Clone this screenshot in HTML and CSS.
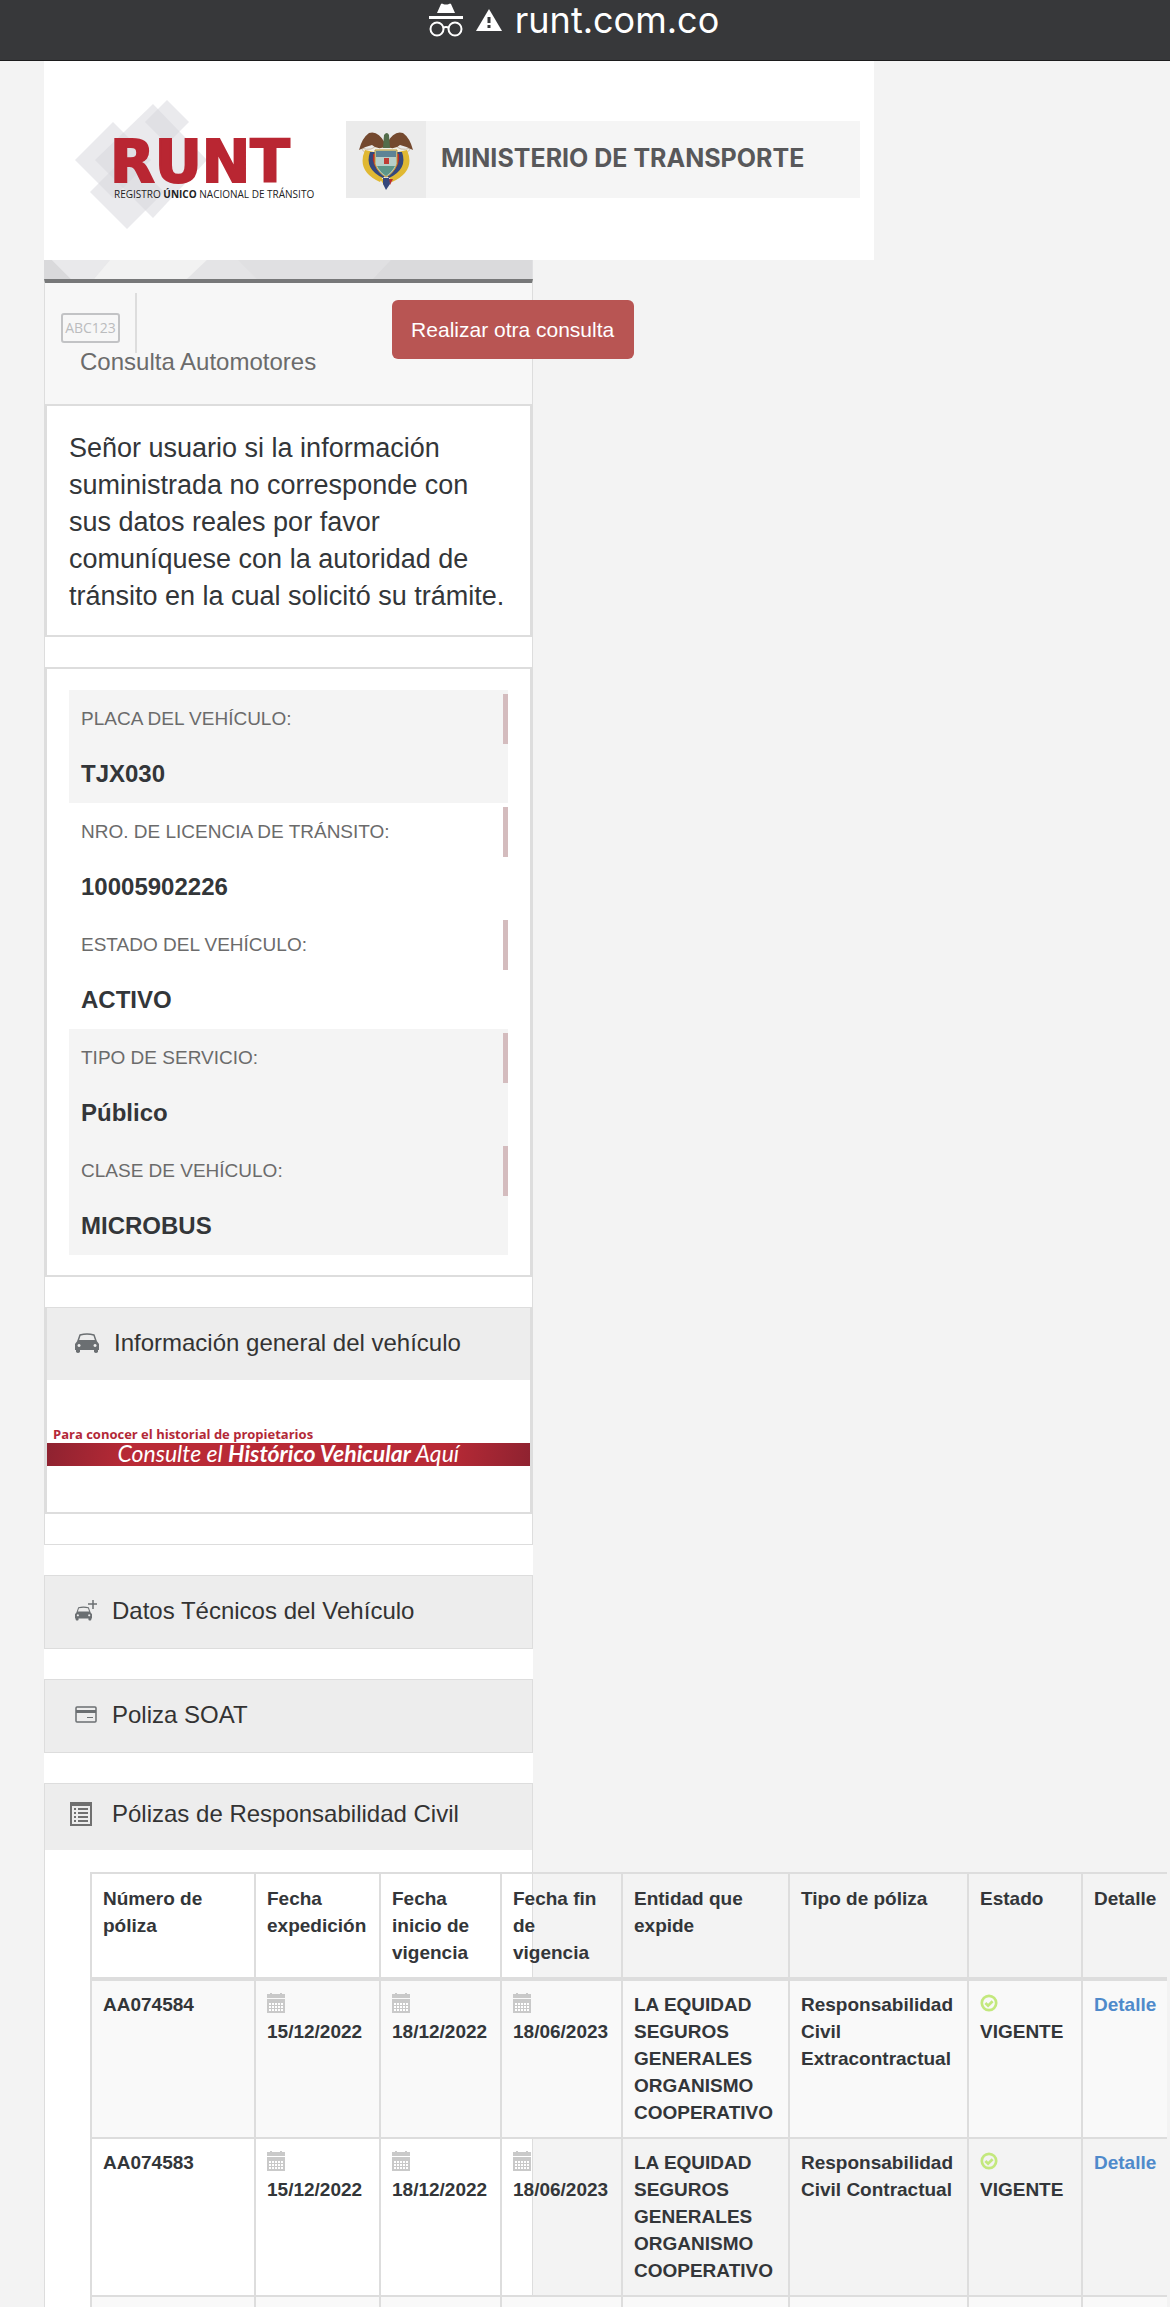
FILE: index.html
```
<!DOCTYPE html>
<html lang="es">
<head>
    <meta charset="UTF-8">
    <meta name="viewport" content="width=device-width, initial-scale=1.0">
    <title>RUNT - Consulta Automotores</title>
    <link rel="stylesheet" href="styles.css">
</head>
<body>
    <!-- iconos reutilizables -->
    <svg width="0" height="0" class="sprite" aria-hidden="true">
        <symbol id="calendar" viewBox="0 0 18 20">
            <path fill="#c9c9c9" d="M0 1h3V0h2v1h8V0h2v1h3v4H0zM0 6h18v14H0z"/>
            <path stroke="#fff" stroke-width="2" stroke-dasharray="2 1" d="M2 11h14M2 14h14M2 17h14"/>
        </symbol>
        <symbol id="check" viewBox="0 0 20 20">
            <circle cx="10" cy="10" r="8" fill="none" stroke="#c3e87d" stroke-width="3"/>
            <path d="M6 10l3 3 5-5" fill="none" stroke="#c3e87d" stroke-width="3"/>
        </symbol>
        <symbol id="car" viewBox="0 0 24 20">
            <path d="M3 8L5 2Q12 0 19 2l2 6" fill="none" stroke="#6b6f72" stroke-width="1.5"/>
            <path fill="#6b6f72" fill-rule="evenodd" d="M3 7h18l3 4v6h-1v2q-2 2-4 0v-2H5v2q-2 2-4 0v-2H0v-6zM4 11a1.5 1.5 0 1 0 .1 0zM20 11a1.5 1.5 0 1 0 .1 0z"/>
        </symbol>
    </svg>

    <div class="browser-bar">
        <svg width="34" height="34" viewBox="0 0 34 34" fill="none" stroke="#fff" stroke-width="2">
            <path fill="#fff" stroke="none" d="M8 10l4-9q1-1 2 0 3 1 6 0 1-1 2 0l4 9zM0 13h34v3H0z"/>
            <circle cx="8" cy="26" r="6.5"/>
            <circle cx="26" cy="26" r="6.5"/>
            <path d="M14 25q3-2 6 0"/>
        </svg>
        <svg width="26" height="22" viewBox="0 0 26 22">
            <path fill="#fff" d="M13 0l13 22H0z"/>
            <path stroke="#37383a" stroke-width="3" d="M13 8v6M13 16v3"/>
        </svg>
        <span>runt.com.co</span>
    </div>

    <div class="page">
        <header class="site-header">
            <svg class="logo" width="262" height="150" viewBox="0 0 262 150">
                <g fill="#d6d6dc" fill-opacity=".5">
                    <path d="M39 37l38 38-38 38L1 75z"/>
                    <path d="M79 19l54 56-54 58-58-58z"/>
                    <path d="M93 15l22 22-22 22-22-22z"/>
                    <path d="M53 70l37 37-37 37-37-37z"/>
                </g>
                <text class="logo-name" x="36" y="97">RUNT</text>
                <text class="logo-sub" x="40" y="113">REGISTRO <tspan class="strong">ÚNICO</tspan> NACIONAL DE TRÁNSITO</text>
            </svg>
            <div class="ministry">
                <div class="ministry-shield">
                    <svg width="58" height="60" viewBox="0 0 58 60">
                        <path fill="#f2f0e6" stroke="#c9b9a5" d="M4 18q12 4 16-4h18q4 8 16 4-5 8-15 8H19q-10 0-15-8z"/>
                        <path fill="#74492f" d="M28 17Q20 20 15 15 7 17 2 20 5 8 12 3q9-3 16 10zM30 17q8 3 13-2 8 2 13 5-3-12-10-17-9-3-16 10z"/>
                        <path fill="#536d4b" d="M27 5q3-4 5 0l1 13h-7z"/>
                        <path fill="#e0b832" d="M8 20q-9 21 15 32l4-7Q14 38 17 22zM50 20q9 21-15 32l-4-7q13-7 10-23z"/>
                        <path fill="#34477c" d="M13 22q-6 17 13 26l3-3Q18 38 19 22zM45 22q6 17-13 26l-3-3q11-7 10-23z"/>
                        <path fill="#b72e2b" d="M16 24q-2 12 9 20l2-2Q18 35 19 24zM42 24q2 12-9 20l-2-2q9-7 8-18z"/>
                        <path fill="#b7cfc9" stroke="#c39b34" d="M18 20h22v14q-3 9-11 13-8-4-11-13z"/>
                        <path fill="#5d8395" d="M19 21h20v6H19z"/>
                        <path fill="#bf3c35" d="M27 28h5v6h-5z"/>
                        <path fill="#5d9689" d="M20 36h18q-3 6-9 10-6-4-9-10z"/>
                        <path fill="#e0b832" d="M23 49h4v6z"/>
                        <path fill="#b72e2b" d="M31 49h5l-3 6z"/>
                        <path fill="#34477c" d="M26 48h6l1 6-4 6-3-6z"/>
                    </svg>
                </div>
                <div class="ministry-name">MINISTERIO DE TRANSPORTE</div>
            </div>
        </header>

        <main class="column">
            <svg class="strip" viewBox="0 0 489 19" preserveAspectRatio="none">
                <path fill="#e4e4e6" d="M0 0h489v19H0z"/>
                <path fill="#d9d9db" d="M0 0h8l19 19H0z"/>
                <path fill="#e9e9eb" d="M8 0h58L50 19H27z"/>
                <path fill="#f2f2f2" d="M66 0h97l-20 19H50z"/>
                <path fill="#e0e0e2" d="M194 0h153l-18 19H213z"/>
                <path fill="#dadadc" d="M347 0h142v19H329z"/>
            </svg>

            <section class="outer">
                <div class="title-bar">
                    <div class="plate"><span>ABC123</span></div>
                    <h1>Consulta Automotores</h1>
                    <button type="button" class="btn-query">Realizar otra consulta</button>
                </div>

                <div class="box notice">
                    <p>Señor usuario si la información suministrada no corresponde con sus datos reales por favor comuníquese con la autoridad de tránsito en la cual solicitó su trámite.</p>
                </div>

                <div class="box vehicle">
                    <dl>
                        <div class="row shaded"><dt>PLACA DEL VEHÍCULO:</dt><dd>TJX030</dd></div>
                        <div class="row"><dt>NRO. DE LICENCIA DE TRÁNSITO:</dt><dd>10005902226</dd></div>
                        <div class="row"><dt>ESTADO DEL VEHÍCULO:</dt><dd>ACTIVO</dd></div>
                        <div class="row shaded"><dt>TIPO DE SERVICIO:</dt><dd>Público</dd></div>
                        <div class="row shaded"><dt>CLASE DE VEHÍCULO:</dt><dd>MICROBUS</dd></div>
                    </dl>
                </div>

                <div class="box general">
                    <h2 class="panel-head">
                        <svg width="24" height="20"><use href="#car"/></svg>
                        Información general del vehículo
                    </h2>
                    <a href="#" class="banner">
                        <span class="banner-top">Para conocer el historial de propietarios</span>
                        <span class="banner-bar">Consulte el <b>Histórico Vehicular</b> Aquí</span>
                    </a>
                </div>
            </section>

            <section class="panel">
                <h2 class="panel-head">
                    <svg width="22" height="22" viewBox="0 0 22 22">
                        <use href="#car" y="6" width="17" height="15"/>
                        <path stroke="#6b6f72" stroke-width="1.5" d="M18 0v9M13 4h9"/>
                    </svg>
                    Datos Técnicos del Vehículo
                </h2>
            </section>

            <section class="panel">
                <h2 class="panel-head">
                    <svg width="22" height="17" viewBox="0 0 22 17">
                        <rect x="1" y="1" width="20" height="15" rx="1" fill="none" stroke="#6b6f72" stroke-width="1.5"/>
                        <path fill="#6b6f72" d="M1 4h20v3H1zM12 11h6v1h-6z"/>
                    </svg>
                    Poliza SOAT
                </h2>
            </section>

            <section class="panel policies">
                <h2 class="panel-head">
                    <svg width="22" height="24" viewBox="0 0 22 24">
                        <path fill="#707070" fill-rule="evenodd" d="M0 0h22v24H0zM2 4v18h18V4z"/>
                        <path fill="#707070" d="M4 6h2v2H4zM4 10h2v2H4zM4 14h2v2H4zM4 18h2v2H4zM8 6h10v2H8zM8 10h10v2H8zM8 14h10v2H8zM8 18h10v2H8z"/>
                    </svg>
                    Pólizas de Responsabilidad Civil
                </h2>
                <div class="table-wrap">
                    <table>
                        <colgroup>
                            <col class="c-num"><col class="c-exp"><col class="c-date"><col class="c-date">
                            <col class="c-ent"><col class="c-type"><col class="c-state"><col class="c-det">
                        </colgroup>
                        <thead>
                            <tr>
                                <th>Número de póliza</th>
                                <th>Fecha expedición</th>
                                <th>Fecha inicio de vigencia</th>
                                <th>Fecha fin de vigencia</th>
                                <th>Entidad que expide</th>
                                <th>Tipo de póliza</th>
                                <th>Estado</th>
                                <th>Detalle</th>
                            </tr>
                        </thead>
                        <tbody>
                            <tr>
                                <td>AA074584</td>
                                <td><svg class="ico"><use href="#calendar"/></svg>15/12/2022</td>
                                <td><svg class="ico"><use href="#calendar"/></svg>18/12/2022</td>
                                <td><svg class="ico"><use href="#calendar"/></svg>18/06/2023</td>
                                <td>LA EQUIDAD SEGUROS GENERALES ORGANISMO COOPERATIVO</td>
                                <td>Responsabilidad Civil Extracontractual</td>
                                <td><svg class="ico"><use href="#check"/></svg>VIGENTE</td>
                                <td><a href="#">Detalle</a></td>
                            </tr>
                            <tr>
                                <td>AA074583</td>
                                <td><svg class="ico"><use href="#calendar"/></svg>15/12/2022</td>
                                <td><svg class="ico"><use href="#calendar"/></svg>18/12/2022</td>
                                <td><svg class="ico"><use href="#calendar"/></svg>18/06/2023</td>
                                <td>LA EQUIDAD SEGUROS GENERALES ORGANISMO COOPERATIVO</td>
                                <td>Responsabilidad Civil Contractual</td>
                                <td><svg class="ico"><use href="#check"/></svg>VIGENTE</td>
                                <td><a href="#">Detalle</a></td>
                            </tr>
                            <tr class="next-row">
                                <td></td><td></td><td></td><td></td><td></td><td></td><td></td><td></td>
                            </tr>
                        </tbody>
                    </table>
                </div>
            </section>
        </main>
    </div>
</body>
</html>
```
FILE: styles.css
```
* {
    box-sizing: border-box;
}
body {
    margin: 0;
    background: #f3f3f3;
    color: #333639;
    font-family: "Liberation Sans", Arial, sans-serif;
    font-size: 19px;
    line-height: 27px;
}
h1, h2, p, dl, dd {
    margin: 0;
}
svg {
    flex: none;
}
.sprite {
    position: absolute;
}

/* barra del navegador */
.browser-bar {
    display: flex;
    justify-content: center;
    align-items: center;
    gap: 13px;
    height: 61px;
    padding: 0 22px 20px 0;
    background: #37383a;
    border-bottom: 1px solid #1c1c1d;
    color: #fff;
    font-family: Inter, sans-serif;
    font-size: 36px;
    line-height: 38px;
}

.page {
    padding-left: 44px;
}

/* encabezado */
.site-header {
    display: flex;
    align-items: center;
    gap: 10px;
    width: 73.7%;
    height: 199px;
    padding: 0 14px 2px 30px;
    background: #fff;
}
.logo-name {
    font: bold 58px "DejaVu Sans", sans-serif;
    fill: #b92632;
    stroke: #b92632;
    stroke-width: 2px;
}
.logo-sub {
    font: 10px "Open Sans", sans-serif;
    fill: #222;
}
.logo-sub .strong {
    font-weight: bold;
}
.ministry {
    display: flex;
    flex: 1;
    height: 77px;
    background: #f5f5f5;
}
.ministry-shield {
    display: flex;
    justify-content: center;
    align-items: center;
    width: 80px;
    background: #ebebeb;
}
.ministry-name {
    padding-left: 15px;
    color: #58585a;
    font-family: Inter, sans-serif;
    font-size: 25px;
    font-weight: bold;
    line-height: 75px;
    white-space: nowrap;
}

/* columna principal */
.column {
    width: 43.4%;
    background: #fff;
}
.strip {
    display: block;
    width: 100%;
    height: 19px;
}
.outer {
    border: 1px solid #ddd;
    border-top: 4px solid #777879;
    margin-bottom: 30px;
}
.title-bar {
    position: relative;
    height: 121px;
    padding: 10px 16px;
    background: #f7f7f7;
}
.plate {
    width: 76px;
    height: 60px;
    padding-top: 20px;
    border-right: 2px solid #ddd;
}
.plate span {
    display: block;
    width: 59px;
    height: 30px;
    border: 2px solid #c2c3c5;
    border-radius: 3px;
    color: #bbbcbe;
    font-family: "Open Sans", sans-serif;
    font-size: 14px;
    line-height: 26px;
    text-align: center;
}
.title-bar h1 {
    padding-left: 19px;
    color: #6b6b6b;
    font-size: 24px;
    font-weight: normal;
    line-height: 18px;
}
.btn-query {
    position: absolute;
    top: 17px;
    right: -102px;
    width: 242px;
    height: 59px;
    border: none;
    border-radius: 6px;
    background: #b85553;
    color: #fff;
    font-family: inherit;
    font-size: 21px;
    cursor: pointer;
}
.box {
    border: 2px solid #ddd;
    margin-bottom: 30px;
}
.notice {
    padding: 24px 20px 20px 22px;
    font-size: 27px;
    line-height: 37px;
}
.vehicle {
    padding: 21px 22px 20px;
}
.shaded {
    background: #f4f4f4;
}
.row dt {
    height: 55px;
    padding-left: 12px;
    border: solid transparent;
    border-width: 4px 0 1px;
    background: linear-gradient(#d4bcbe, #d4bcbe) right / 5px 100% no-repeat padding-box;
    color: #6b6b6b;
    font-size: 19px;
    line-height: 50px;
}
.row dd {
    height: 58px;
    padding-left: 12px;
    font-size: 24px;
    font-weight: bold;
    line-height: 57px;
}
.general {
    border-top-width: 1px;
    padding-bottom: 46px;
}

/* paneles */
.panel {
    border: 1px solid #ddd;
    margin-bottom: 30px;
}
.panel-head {
    display: flex;
    align-items: center;
    gap: 15px;
    height: 72px;
    padding: 0 30px 3px;
    background: #ededed;
    color: #333;
    font-size: 24px;
    font-weight: normal;
}
.general .panel-head {
    padding-left: 28px;
}
.banner {
    display: block;
    padding-top: 46px;
    text-decoration: none;
}
.banner-top {
    display: block;
    padding-left: 6px;
    color: #b32837;
    font-family: "Open Sans", sans-serif;
    font-size: 13px;
    font-weight: bold;
    line-height: 17px;
}
.banner-bar {
    display: block;
    height: 23px;
    background: linear-gradient(100deg, #8e2230, #b92a36 18%, #b92a36 82%, #8e2230);
    color: #fff;
    font-family: Lato, sans-serif;
    font-size: 23px;
    font-style: italic;
    line-height: 20px;
    text-align: center;
}

/* tabla de pólizas */
.policies {
    border-bottom: none;
    margin-bottom: 0;
}
.policies .panel-head {
    gap: 20px;
    height: 66px;
    padding: 0 25px 7px;
}
.table-wrap {
    width: calc(100vw - 93px);
    margin: 22px 0 0 45px;
    overflow: hidden;
}
table {
    width: 1085px;
    border-collapse: collapse;
    table-layout: fixed;
}
.c-num { width: 164px; }
.c-exp { width: 125px; }
.c-date { width: 121px; }
.c-ent { width: 167px; }
.c-type { width: 179px; }
.c-state { width: 114px; }
th, td {
    padding: 10px 8px 11px 11px;
    border: 2px solid #ddd;
    font-weight: bold;
    text-align: left;
    vertical-align: top;
}
th {
    padding-top: 11px;
    border-bottom-width: 4px;
}
tbody tr:nth-child(odd) {
    background: #f9f9f9;
}
td a {
    color: #4f8acb;
    text-decoration: none;
}
.ico {
    display: block;
    width: 18px;
    height: 20px;
    margin: 2px 0 5px;
}
.next-row td {
    height: 11px;
    padding: 0;
    border-bottom: none;
}
```
